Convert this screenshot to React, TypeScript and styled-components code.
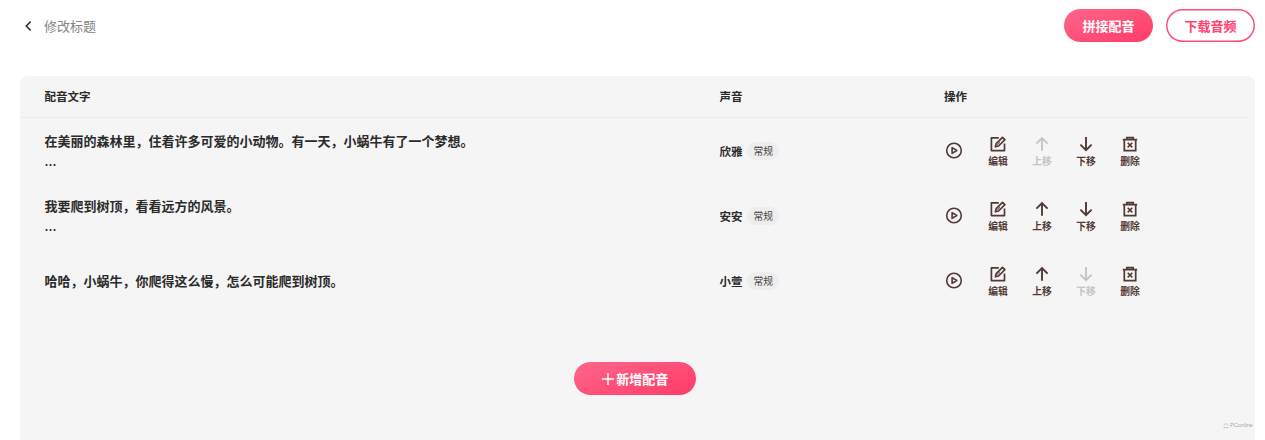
import React from "react";
import styled, { createGlobalStyle } from "styled-components";

const GlobalStyle = createGlobalStyle`
  * { box-sizing: border-box; }
  html, body { margin: 0; height: 100%; overflow: hidden; background: #fff; }
  body { font-family: "Noto Sans CJK SC", sans-serif; color: #2a2a2a; }
  button { font-family: inherit; padding: 0; margin: 0; border: 0; background: none; }
`;

const Page = styled.main`
  height: 440px;
  display: flex;
  flex-direction: column;
  padding: 9px 10px 0 20.4px;
  overflow: hidden;
`;

const TopBar = styled.header`
  display: flex;
  align-items: center;
  justify-content: space-between;
  height: 33px;
  flex: none;
`;

const BackTitle = styled.div`
  display: flex;
  align-items: center;
  gap: 10px;
  padding-left: 3.6px;
  font-size: 13px;
  line-height: 20px;
  color: #858585;
  svg { width: 10px; height: 12px; }
`;

const TopActions = styled.div`
  display: flex;
  gap: 13px;
`;

const PillButton = styled.button<{ $outline?: boolean; $width: number }>`
  display: flex;
  align-items: center;
  justify-content: center;
  gap: 2px;
  width: ${(p) => p.$width}px;
  height: 32.5px;
  border-radius: 17px;
  padding-top: 1px;
  font-size: 13px;
  font-weight: 700;
  line-height: 20px;
  color: ${(p) => (p.$outline ? "#ff4370" : "#fff")};
  border: 0;
  box-shadow: ${(p) => (p.$outline ? "inset 0 0 0 1.5px #ff4d78" : "none")};
  background: ${(p) => (p.$outline ? "#fff" : "linear-gradient(160deg, #ff668a 0%, #ff3b68 100%)")};
`;

const Panel = styled.section`
  display: flex;
  flex-direction: column;
  flex: 1;
  margin-top: 34px;
  border-radius: 8px 8px 0 0;
  background: #f5f5f5;
`;

const columns = `
  display: grid;
  grid-template-columns: 675px 224.6px 1fr;
  align-items: center;
  padding-left: 24.1px;
`;

const HeadRow = styled.div`
  ${columns}
  height: 42px;
  margin-right: 5px;
  padding-bottom: 1px;
  border-bottom: 1px solid #ebebeb;
  font-size: 11.5px;
  font-weight: 700;
  line-height: 18px;
`;

const Row = styled.div`
  ${columns}
  height: 65px;
`;

const Script = styled.div`
  display: flex;
  flex-direction: column;
  font-size: 13px;
  font-weight: 700;
  line-height: 22px;
`;

const ScriptLine = styled.p<{ $lead: boolean }>`
  margin: 0;
  padding-top: ${(p) => (p.$lead ? 3 : 0)}px;
`;

const More = styled.span`
  padding-top: 1px;
  margin-bottom: -1px;
  font-size: 12px;
  line-height: 23px;
`;

const Voice = styled.div`
  display: flex;
  align-items: center;
  gap: 5px;
  font-size: 11.5px;
  font-weight: 700;
  line-height: 18px;
`;

const Tag = styled.span`
  padding: 0 6px;
  border-radius: 9px;
  background: #ededed;
  color: #444;
  font-size: 9.8px;
  font-weight: 400;
  line-height: 18px;
`;

const Actions = styled.div`
  display: flex;
  align-items: center;
`;

const PlayButton = styled.button`
  display: flex;
  width: 20px;
  margin-right: 24px;
  justify-content: center;
  color: #533936;
`;

const Action = styled.button<{ $disabled: boolean }>`
  display: flex;
  flex-direction: column;
  align-items: center;
  width: 20px;
  margin-right: 24px;
  padding-top: 2px;
  color: ${(p) => (p.$disabled ? "#c6c3c3" : "#533936")};
  font-size: 9.8px;
  font-weight: 700;
  line-height: 14px;
  white-space: nowrap;
  svg { margin-bottom: 1px; }
`;

const AddArea = styled.div`
  display: flex;
  justify-content: center;
  margin-top: 49px;
  padding-right: 5px;
`;

const Watermark = styled.div`
  display: flex;
  align-items: center;
  justify-content: flex-end;
  gap: 1px;
  margin-top: auto;
  padding: 0 2px 10px 0;
  font: 5.7px/10px "Liberation Sans", sans-serif;
  color: #a8a8a8;
`;

type IconName = "play" | "edit" | "up" | "down" | "trash";

const Icon = ({ name }: { name: IconName }) => (
  <svg width="18" height="18" viewBox="0 0 18 18" fill="none" stroke="currentColor" strokeWidth="1.6">
    {name === "play" && (
      <>
        <circle cx="9" cy="8.5" r="7.3" />
        <path d="M7.1 5.6v5.8l4.7-2.9z" strokeWidth="1.6" strokeLinejoin="round" />
      </>
    )}
    {name === "edit" && (
      <>
        <path d="M9.8 2.8H2.4v12.8h13.1V8.4" strokeWidth="1.7" strokeLinejoin="round" />
        <path d="M6.4 11.8l.8-3.2 6.3-6.3 2.4 2.4-6.3 6.3z" strokeWidth="1.7" strokeLinejoin="round" />
        <path d="M8.2 10.1l2.8-2.8" strokeWidth="1" />
      </>
    )}
    {name === "up" && <path d="M9 15.8V3M3.4 8.6L9 3l5.6 5.6" strokeWidth="1.9" />}
    {name === "down" && <path d="M9 2v13M3.4 9.6L9 15.2l5.6-5.6" strokeWidth="1.9" />}
    {name === "trash" && (
      <>
        <path d="M1.8 4.6h14.4M5.8 4V2.6h6.4V4M3.3 4.6v11h11.4v-11" strokeWidth="1.7" />
        <path d="M6.7 7.8l4.6 4.6M11.3 7.8l-4.6 4.6" strokeWidth="1.6" />
      </>
    )}
  </svg>
);

const lines = [
  { text: "在美丽的森林里，住着许多可爱的小动物。有一天，小蜗牛有了一个梦想。", more: true, voice: "欣雅" },
  { text: "我要爬到树顶，看看远方的风景。", more: true, voice: "安安" },
  { text: "哈哈，小蜗牛，你爬得这么慢，怎么可能爬到树顶。", more: false, voice: "小萱" },
];

const actions: { icon: IconName; label: string }[] = [
  { icon: "edit", label: "编辑" },
  { icon: "up", label: "上移" },
  { icon: "down", label: "下移" },
  { icon: "trash", label: "删除" },
];

export default function App() {
  return (
    <>
      <GlobalStyle />
      <Page>
        <TopBar>
          <BackTitle>
            <svg viewBox="0 0 10 12" fill="none" stroke="#333" strokeWidth="1.6">
              <path d="M6.6 1.6L2.3 6l4.3 4.4" />
            </svg>
            <span>修改标题</span>
          </BackTitle>
          <TopActions>
            <PillButton $width={89}>拼接配音</PillButton>
            <PillButton $width={89} $outline>下载音频</PillButton>
          </TopActions>
        </TopBar>
        <Panel>
          <HeadRow>
            <span>配音文字</span>
            <span>声音</span>
            <span>操作</span>
          </HeadRow>
          {lines.map((line, i) => (
            <Row key={line.voice}>
              <Script>
                <ScriptLine $lead={line.more}>{line.text}</ScriptLine>
                {line.more && <More>…</More>}
              </Script>
              <Voice>
                {line.voice}
                <Tag>常规</Tag>
              </Voice>
              <Actions>
                <PlayButton aria-label="播放">
                  <Icon name="play" />
                </PlayButton>
                {actions.map(({ icon, label }) => (
                  <Action
                    key={icon}
                    $disabled={(icon === "up" && i === 0) || (icon === "down" && i === lines.length - 1)}
                  >
                    <Icon name={icon} />
                    {label}
                  </Action>
                ))}
              </Actions>
            </Row>
          ))}
          <AddArea>
            <PillButton $width={122}>
              <svg width="12" height="12" viewBox="0 0 12 12" stroke="#fff" strokeWidth="1.4">
                <path d="M6 0v12M0 6h12" />
              </svg>
              新增配音
            </PillButton>
          </AddArea>
          <Watermark>
            <svg width="6" height="7" viewBox="0 0 7 7" fill="none" stroke="currentColor" strokeWidth=".8">
              <path d="M1 3.5L3.5 1 6 3.5M.5 6h6" />
            </svg>
            PConline
          </Watermark>
        </Panel>
      </Page>
    </>
  );
}
